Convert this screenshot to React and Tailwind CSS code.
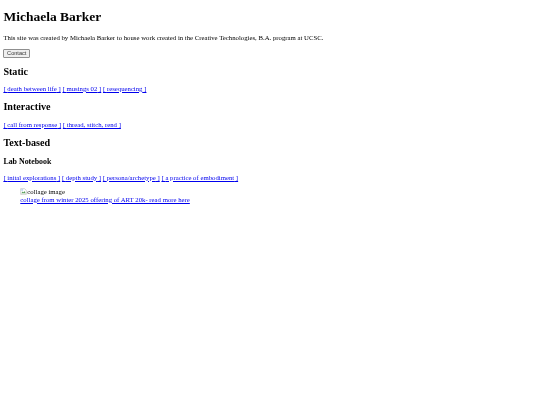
const linkClass = 'text-[#0000ee] underline';

const Links = ({ items, className = '' }) => (
  <p className={className}>
    {items.map((item, i) => (
      <span key={item}>
        {i > 0 && ' '}
        <a href="#" className={linkClass}>[ {item} ]</a>
      </span>
    ))}
  </p>
);

export default function App() {
  return (
    <div className="min-h-[405px] bg-white px-[3.4px] pt-[3.4px] font-['Liberation_Serif',serif] text-[6.75px] leading-[8px] text-black blur-[0.2px]">
      <h1 className="mt-[5.8px] text-[13.5px] leading-[16px] font-bold">Michaela Barker</h1>
      <p className="mt-[8.5px]">This site was created by Michaela Barker to house work created in the Creative Technologies, B.A. program at UCSC.</p>
      <button className="mt-[7.6px] flex h-[8.4px] w-[26.7px] items-center justify-center rounded-[1px] border-[0.5px] border-[#8f8f8f] bg-[#efefef] font-['Liberation_Sans',sans-serif] text-[5.6px] leading-none text-[#333]">Contact</button>
      <h2 className="mt-[8.2px] text-[10.1px] leading-[12px] font-bold">Static</h2>
      <Links className="mt-[7px]" items={['death between life', 'musings 02', 'resequencing']} />
      <h2 className="mt-[8px] text-[10.1px] leading-[12px] font-bold">Interactive</h2>
      <Links className="mt-[8px]" items={['call from response', 'thread, stitch, rend']} />
      <h2 className="mt-[8px] text-[10.1px] leading-[12px] font-bold">Text-based</h2>
      <h3 className="mt-[8.5px] text-[7.9px] leading-[9px] font-bold">Lab Notebook</h3>
      <Links className="mt-[7.5px]" items={['inital explorations', 'depth study', 'persona/archetype', 'a practice of embodiment']} />
      <figure className="mt-[6px] ml-[16.9px]">
        <div className="flex items-center">
          <svg width="7" height="7" viewBox="0 0 16 16" className="shrink-0">
            <path d="M1.5 1.5h9l4 4v9h-13z" fill="#fff" stroke="#a0a0a0" />
            <path d="M3 12l3-4 2 2 2-3 3 5z" fill="#5a9e5a" />
            <rect x="3" y="3" width="4" height="3" fill="#a8c8f0" />
          </svg>
          <span>collage image</span>
        </div>
        <figcaption><a href="#" className={linkClass}>collage from winter 2025 offering of ART 20k- read more here</a></figcaption>
      </figure>
    </div>
  );
}
